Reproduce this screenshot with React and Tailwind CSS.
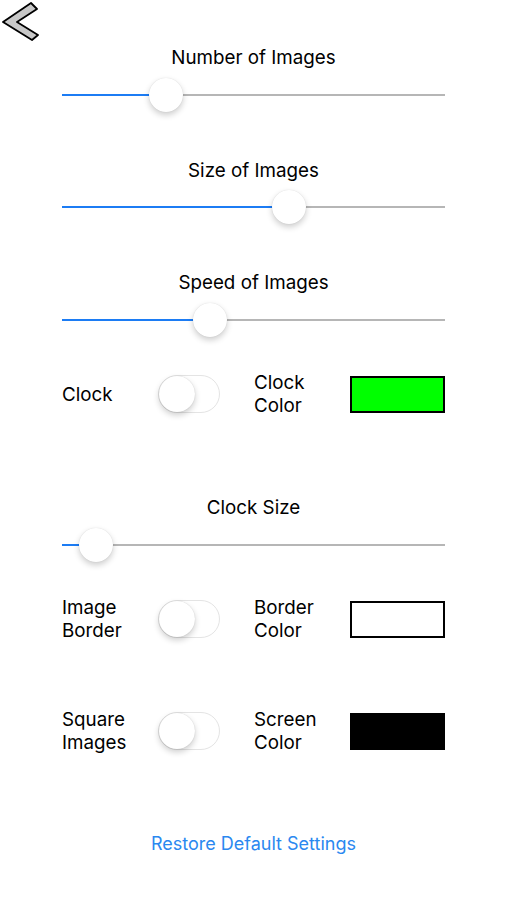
const FONT = { fontFamily: 'Inter, "Liberation Sans", sans-serif' }

function BackIcon() {
  return (
    <svg width="40" height="40" viewBox="0 0 40 40">
      <polygon points="2,21 30,2 36,8 16,21 37,34 31,39" fill="#c8c8c8" stroke="#000" strokeWidth="1.8" strokeLinejoin="round" />
    </svg>
  )
}

function Slider({ pos }) {
  // pos = thumb center x relative to the track start (track 383px wide)
  return (
    <div className="relative ml-[62px] h-[34px] w-[383px]">
      <div className="absolute left-0 right-0 top-[16px] h-[2px] bg-[#b6b6b6]" />
      <div className="absolute left-0 top-[16px] h-[2px] bg-[#1c7cf4]" style={{ width: pos }} />
      <div
        className="absolute top-0 h-[34px] w-[34px] rounded-full bg-white shadow-[0_3px_6px_rgba(0,0,0,0.2),0_0_1px_rgba(0,0,0,0.15)]"
        style={{ left: pos - 17 }}
      />
    </div>
  )
}

function SliderLabel({ children, className = '' }) {
  return <div className={`text-center text-[18.8px] leading-[24px] text-black ${className}`}>{children}</div>
}

function Toggle() {
  return (
    <div className="relative h-[38px] w-[62px] rounded-full border border-[#e4e4e4] bg-white">
      <div className="absolute left-0 top-[0px] h-[36px] w-[36px] rounded-full bg-white shadow-[0_3px_6px_rgba(0,0,0,0.2),0_0_1px_rgba(0,0,0,0.2)]" />
    </div>
  )
}

function Row({ left, right, swatch, className = '' }) {
  return (
    <div className={`flex h-[38px] items-center ${className}`}>
      <div className="ml-[62px] w-[96px] text-[18.8px] leading-[23px] text-black">{left}</div>
      <Toggle />
      <div className="ml-[34px] w-[96px] text-[18.8px] leading-[23px] text-black">{right}</div>
      <div className={`h-[37px] w-[95px] ${swatch}`} />
    </div>
  )
}

export default function App() {
  return (
    <div className="h-[900px] w-[507px] bg-white" style={FONT}>
      <div className="h-[40px] pl-[1px] pt-[1px]">
        <BackIcon />
      </div>
      <SliderLabel className="mt-[6px]">Number of Images</SliderLabel>
      <div className="mt-[8px]">
        <Slider pos={104} />
      </div>
      <SliderLabel className="mt-[47px]">Size of Images</SliderLabel>
      <div className="mt-[7px]">
        <Slider pos={227} />
      </div>
      <SliderLabel className="mt-[47px]">Speed of Images</SliderLabel>
      <div className="mt-[8px]">
        <Slider pos={148} />
      </div>
      <Row
        className="mt-[38px]"
        left="Clock"
        right={<>Clock<br />Color</>}
        swatch="border-2 border-black bg-[#00ff00]"
      />
      <SliderLabel className="mt-[83px]">Clock Size</SliderLabel>
      <div className="mt-[8px]">
        <Slider pos={34} />
      </div>
      <Row
        className="mt-[38px]"
        left={<>Image<br />Border</>}
        right={<>Border<br />Color</>}
        swatch="border-2 border-black bg-white"
      />
      <Row
        className="mt-[74px]"
        left={<>Square<br />Images</>}
        right={<>Screen<br />Color</>}
        swatch="bg-black"
      />
      <div className="mt-[82px] text-center text-[18px] leading-[24px] text-[#2a88f0]">Restore Default Settings</div>
    </div>
  )
}
